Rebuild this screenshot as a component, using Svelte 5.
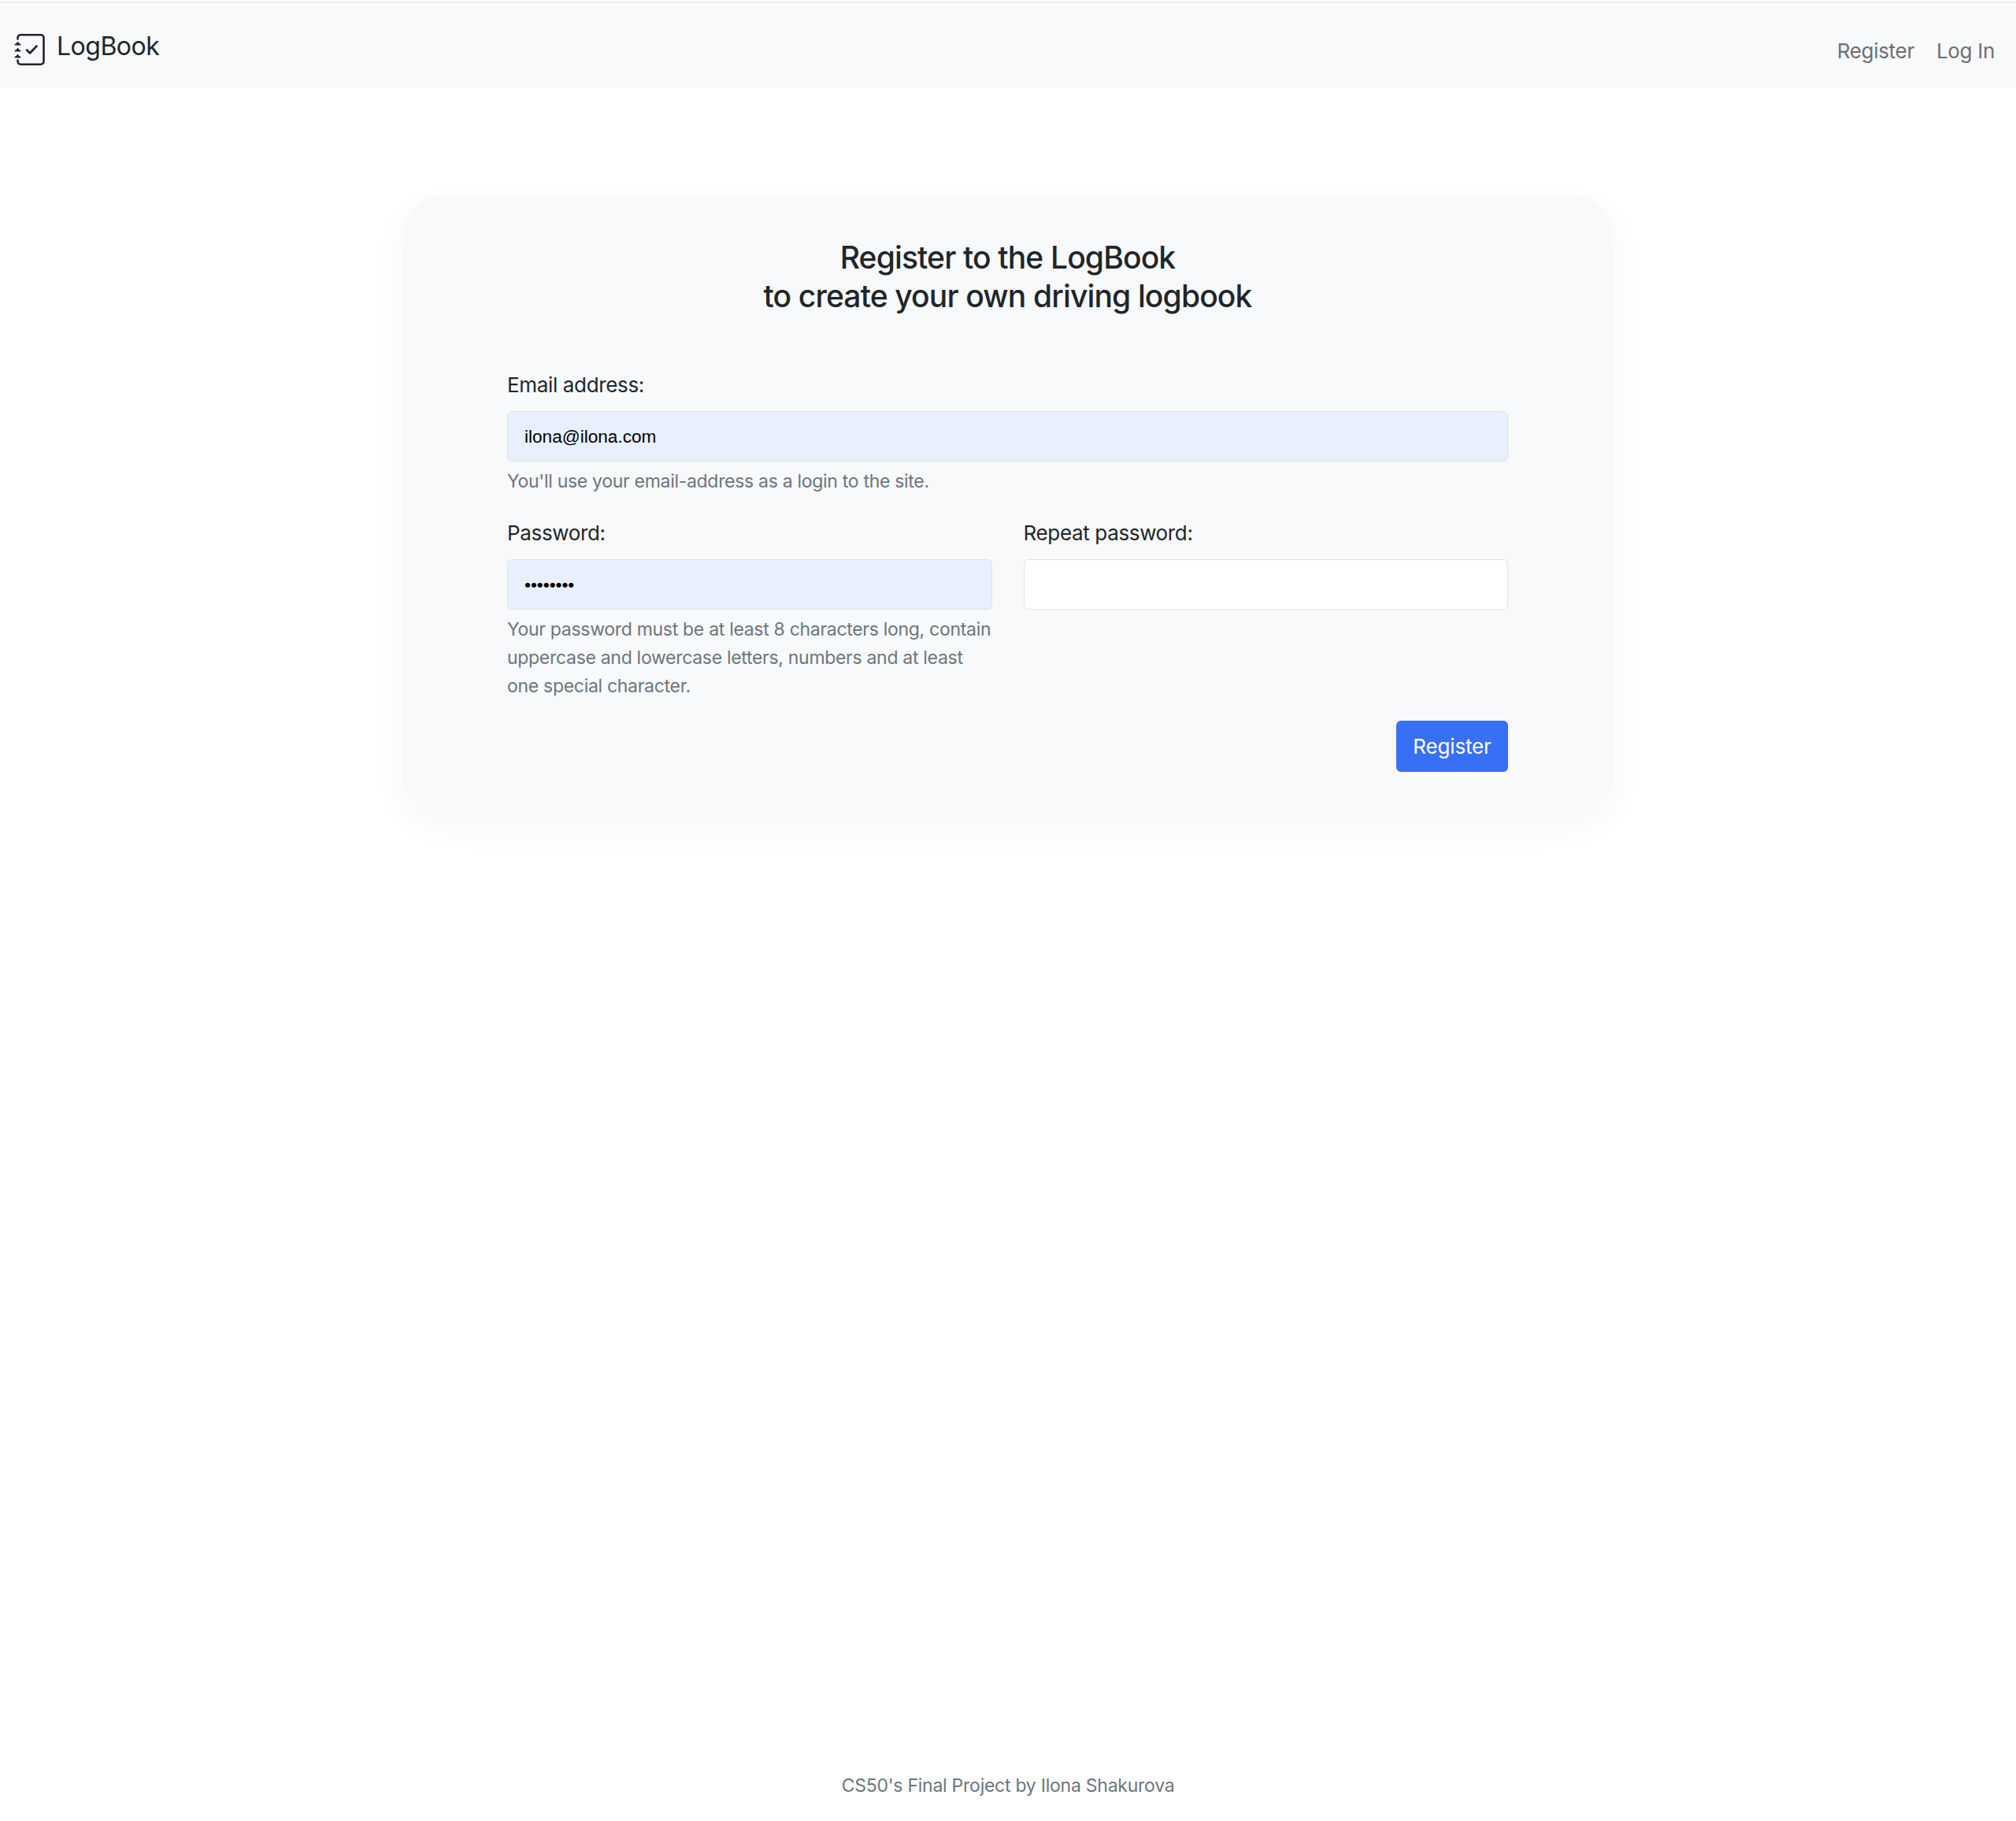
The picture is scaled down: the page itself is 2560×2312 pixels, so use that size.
<script>
    let email = $state('ilona@ilona.com');
    let password = $state('12345678');
    let repeat = $state('');
</script>

<div class="page">
    <nav class="navbar">
        <a class="brand" href="#home">
            <svg class="logo" viewBox="0 0 40 40" fill="none" stroke="#212529" stroke-width="2.6" stroke-linecap="round" stroke-linejoin="round">
                <!-- notebook cover, open on the left where the rings sit -->
                <path d="M4.5 6.5V5a3.7 3.7 0 0 1 3.7-3.7h25.6A3.7 3.7 0 0 1 37.5 5v30a3.7 3.7 0 0 1-3.7 3.7H8.200A3.7 3.7 0 0 1 4.500 35v-1.500" />
                <path d="M16 20.500l4 4 8.500-9" />
                <!-- rings -->
                <path stroke-width="1.800" d="M1.500 13.500h6M1.500 21.500h6M1.500 29.500h6" />
                <path fill="#212529" stroke-width="1" d="M2.500 13l2-2.800 2 2.800zM2.500 21l2-2.800 2 2.800zM2.500 29l2-2.800 2 2.800z" />
            </svg>
            <span>LogBook</span>
        </a>
        <div class="links">
            <a href="#register">Register</a>
            <a href="#login">Log In</a>
        </div>
    </nav>

    <main>
        <section class="card">
            <h1>Register to the LogBook<br />to create your own driving logbook</h1>
            <form>
                <div class="field">
                    <label for="email">Email address:</label>
                    <input id="email" class="filled" type="email" bind:value={email} />
                    <p class="hint">You'll use your email-address as a login to the site.</p>
                </div>
                <div class="row">
                    <div class="field">
                        <label for="password">Password:</label>
                        <input id="password" class="filled" type="password" bind:value={password} />
                        <p class="hint">Your password must be at least 8 characters long, contain uppercase and lowercase letters, numbers and at least one special character.</p>
                    </div>
                    <div class="field">
                        <label for="repeat">Repeat password:</label>
                        <input id="repeat" type="password" bind:value={repeat} />
                    </div>
                </div>
                <div class="actions">
                    <button type="button">Register</button>
                </div>
            </form>
        </section>
    </main>

    <footer>CS50's Final Project by Ilona Shakurova</footer>
</div>

<style>
    :global(body) {
        margin: 0;
        background: #fff;
        font-family: Inter, "Liberation Sans", sans-serif;
        color: #212529;
    }

    .page {
        height: 2312px;
        display: flex;
        flex-direction: column;
    }

    .navbar {
        height: 110px;
        box-sizing: border-box;
        margin-top: 2px;
        border-top: 1px solid #dee2e6;
        background: #f8f9fa;
        display: flex;
        justify-content: space-between;
        padding: 0 27px 0 18px;
        flex-shrink: 0;
    }

    a {
        text-decoration: none;
    }

    .brand {
        display: flex;
        align-items: center;
        gap: 14px;
        color: #212529;
        font-size: 32px;
        letter-spacing: -0.5px;
        padding-top: 2px;
    }

    .logo {
        width: 40px;
        height: 40px;
        margin-top: 8px;
    }

    .links {
        display: flex;
        align-items: center;
        gap: 28px;
        padding-top: 14px;
    }

    .links a {
        color: #6c6f72;
        font-size: 26px;
        letter-spacing: -0.3px;
    }

    main {
        flex: 1;
        padding-top: 136px;
    }

    .card {
        width: 1538px;
        box-sizing: border-box;
        margin: 0 auto;
        padding: 54px 134px 54px 133px;
        background: #f8f9fb;
        border-radius: 50px;
        box-shadow: 0 16px 48px rgba(0, 0, 0, 0.035);
    }

    h1 {
        margin: 0 0 69px;
        text-align: center;
        font-size: 39px;
        font-weight: 500;
        line-height: 49px;
        letter-spacing: -0.85px;
    }

    .field {
        display: flex;
        flex-direction: column;
        min-width: 0;
    }

    label {
        font-size: 26px;
        line-height: 39px;
        margin-bottom: 14px;
        letter-spacing: -0.35px;
    }

    input {
        height: 64px;
        box-sizing: border-box;
        padding: 2px 20px 0 21px;
        font-family: "Liberation Sans", sans-serif;
        font-size: 22.6px;
        color: #000;
        background: #fff;
        border: 1.6px solid #dee2e6;
        border-radius: 6px;
        outline: none;
    }

    input.filled {
        background: #e8f0fe;
    }

    .hint {
        margin: 7px 0 0;
        font-size: 23px;
        line-height: 36px;
        color: #6c757d;
        letter-spacing: -0.3px;
    }

    .row {
        display: grid;
        grid-template-columns: 1fr 1fr;
        gap: 40px;
        margin-top: 28px;
    }

    .actions {
        display: flex;
        justify-content: flex-end;
        margin-top: 26px;
    }

    button {
        height: 65px;
        width: 142px;
        padding: 0;
        font: inherit;
        font-size: 26px;
        letter-spacing: -0.15px;
        color: #fff;
        background: #3870f5;
        border: none;
        border-radius: 6px;
    }

    footer {
        text-align: center;
        font-size: 23px;
        line-height: 36px;
        color: #6c757d;
        letter-spacing: -0.25px;
        padding-bottom: 27px;
    }
</style>
